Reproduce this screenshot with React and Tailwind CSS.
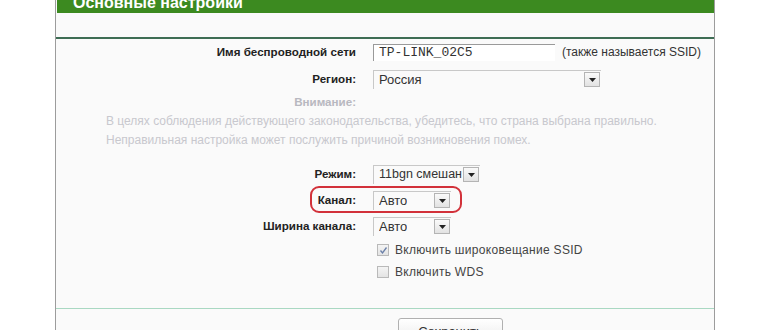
import React from 'react';

const Arrow = () => (
  <span className="flex h-[15px] w-[16px] shrink-0 items-center justify-center border border-[#b4b4b4] bg-gradient-to-b from-[#fafafa] to-[#e2e2e2]">
    <svg width="7" height="4" viewBox="0 0 7 4">
      <path d="M0 0h7L3.5 4z" fill="#222" />
    </svg>
  </span>
);

const Select = ({ value, width, size = 'text-[13px]' }) => (
  <div className={`flex h-[19px] items-center justify-between border-t border-l border-[#c8c8c8] pl-[5px] pr-[1px] ${width}`}>
    <span className={`overflow-hidden whitespace-nowrap text-[#333] ${size}`}>{value}</span>
    <Arrow />
  </div>
);

const Row = ({ label, children, h = 'h-[26px]' }) => (
  <div className={`flex items-center ${h}`}>
    <div className="w-[301px] pr-[1px] text-right text-[11.6px] font-bold text-[#222]">{label}</div>
    <div className="ml-[16px] flex items-center">{children}</div>
  </div>
);

const Checkbox = ({ checked, label }) => (
  <div className="flex h-[22px] items-center pl-[4px]">
    <span className="flex h-[12px] w-[12px] items-center justify-center border border-[#b9b9b9] bg-gradient-to-b from-[#f4f4f4] to-[#e4e4e4]">
      {checked && (
        <svg width="9" height="9" viewBox="0 0 9 9">
          <path d="M1.5 4.5l2 2.5 4-5.5" fill="none" stroke="#6a7fa8" strokeWidth="1.3" />
        </svg>
      )}
    </span>
    <span className="ml-[6px] text-[12px] tracking-[0.3px] text-[#444]">{label}</span>
  </div>
);

export default function App() {
  return (
    <div className="relative h-[330px] w-[770px] overflow-hidden bg-white font-['Liberation_Sans',Arial,sans-serif]">
      <div className="ml-[55px] h-full w-[660px] border-x border-[#9c9c9c] bg-[#fafafa]">
        <div className="ml-[1px] h-[13px] overflow-hidden bg-[#3c8a20] pl-[16px]">
          <div className="mt-[-5px] text-[16px] font-bold leading-[16px] text-white">Основные настройки</div>
        </div>
        <div className="h-[24px]" />
        <div className="h-[2px] bg-[#3e6d54]" />

        <Row label="Имя беспроводной сети">
          <div className="flex h-[17px] w-[182px] items-center border-t border-l border-[#9a9a9a] bg-white pl-[5px] font-['Liberation_Mono',monospace] text-[13px] text-[#333]">
            TP-LINK_02C5
          </div>
          <span className="ml-[7px] text-[12px] text-[#333]">(также называется SSID)</span>
        </Row>
        <div className="h-[1px]" />
        <Row label="Регион:">
          <Select value="Россия" width="w-[228px]" />
        </Row>
        <Row label={<span className="text-[#b8b8c0]">Внимание:</span>} h="h-[20px]">
          <span />
        </Row>
        <div className="pl-[50px] text-[12px] leading-[19px] text-[#c8c8ce]">
          <div>В целях соблюдения действующего законодательства, убедитесь, что страна выбрана правильно.</div>
          <div>Неправильная настройка может послужить причиной возникновения помех.</div>
        </div>
        <div className="h-[11px]" />
        <Row label="Режим:">
          <Select value="11bgn смешан" width="w-[107px]" size="text-[12.5px]" />
        </Row>
        <div className="relative">
          <Row label="Канал:">
            <Select value="Авто" width="w-[78px]" />
          </Row>
          <div className="pointer-events-none absolute left-[254px] top-[-1px] h-[27px] w-[152px] rounded-[9px] border-2 border-[#d2313a]" />
        </div>
        <Row label="Ширина канала:">
          <Select value="Авто" width="w-[78px]" />
        </Row>
        <div className="ml-[317px]">
          <Checkbox checked label="Включить широковещание SSID" />
          <Checkbox label="Включить WDS" />
        </div>
        <div className="h-[25px]" />
        <div className="h-[1px] bg-[#a9d8c2]" />
        <div className="ml-[342px] mt-[9px] flex h-[24px] w-[105px] justify-center rounded-[3px] border border-[#b0b0b0] bg-gradient-to-b from-white to-[#ececec] pt-[3px] text-[13px] text-[#333]">
          Сохранить
        </div>
      </div>
    </div>
  );
}
